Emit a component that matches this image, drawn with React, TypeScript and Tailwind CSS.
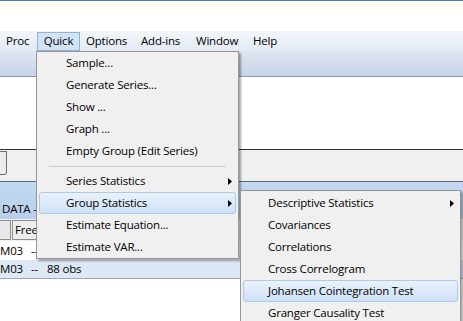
import React from "react";

const font = { fontFamily: '"Open Sans", "Noto Sans", sans-serif' };

function Arrow() {
  return (
    <svg width="4" height="7" viewBox="0 0 4 7" className="block">
      <path d="M0 0 L4 3.5 L0 7 Z" fill="#000" />
    </svg>
  );
}

function Item({ label, arrow, active, pad }: { label: string; arrow?: boolean; active?: boolean; pad: string }) {
  return (
    <div className="relative h-[22px] flex items-center">
      {active && (
        <div className="absolute inset-y-0 left-[2px] right-[2px] rounded-[3px] border border-[#a9c9ee] bg-gradient-to-b from-[#eaf2fc] to-[#cfe1f6]" />
      )}
      <span className={`relative ${pad} text-[11.5px] tracking-[-0.2px] text-black whitespace-nowrap`}>{label}</span>
      {arrow && (
        <span className="absolute right-[6px] top-[8px]">
          <Arrow />
        </span>
      )}
    </div>
  );
}

export default function App() {
  return (
    <div className="relative w-[463px] h-[321px] overflow-hidden bg-white text-[11.5px] tracking-[-0.2px]" style={font}>
      {/* top frame */}
      <div className="h-[1px] bg-[#3f7db5]" />
      <div className="h-[11px] bg-[#fffff5]" />
      <div className="h-[19px] bg-white" />
      {/* menu bar */}
      <div className="h-[20px] flex items-center bg-gradient-to-b from-[#f3f6fb] to-[#e3eaf4] text-black">
        <span className="ml-[6px] w-[31px]">Proc</span>
        <span className="w-[43px] h-[19px] flex items-center justify-center border border-[#8fb2dc] bg-[#d3e3f6]">Quick</span>
        <span className="ml-[6px] w-[55px]">Options</span>
        <span className="w-[55px]">Add-ins</span>
        <span className="w-[57px]">Window</span>
        <span>Help</span>
      </div>
      {/* toolbar */}
      <div className="h-[26px] bg-gradient-to-b from-[#dfe7f2] to-[#c6d4e7] border-b border-[#8e9aa8]" />
      {/* white area */}
      <div className="h-[72px] bg-white" />
      {/* gray panel */}
      <div className="h-[32px] bg-[#f0f0f0] border-t border-[#333] flex items-start">
        <div className="mt-[1px] w-[7px] h-[24px] border border-l-0 border-[#707070] rounded-br-[3px] bg-[#ececec]" />
      </div>
      {/* DATA window */}
      <div className="border-t border-[#5a6a7a] h-[38px] bg-gradient-to-b from-[#c4d9f0] to-[#b7cfeb] flex items-end pb-[2px]">
        <span className="pl-[2px] text-black">DATA -</span>
      </div>
      <div className="h-[22px] bg-[#f0f0f0] flex items-center gap-[1px]">
        <div className="w-[11px] h-[20px] border border-l-0 border-[#8d8d8d] bg-[#e8e8e8]" />
        <div className="h-[20px] px-[2px] border border-[#8d8d8d] bg-[#eeeeee] flex items-center">Freeze</div>
      </div>
      <div className="h-[19px] bg-white flex items-center">
        <span>M03</span>
        <span className="ml-[8px]">--</span>
      </div>
      <div className="h-[19px] bg-[#dce8f6] border-b border-[#9aa9ba] flex items-center">
        <span>M03</span>
        <span className="ml-[8px]">--</span>
        <span className="ml-[9px]">88 obs</span>
      </div>

      {/* Quick menu */}
      <div className="absolute left-[36px] top-[51px] w-[203px] border border-[#979797] bg-[#f0f0f0] shadow-[2px_2px_2px_rgba(0,0,0,0.35)]">
        <Item pad="pl-[29px]" label="Sample..." />
        <Item pad="pl-[29px]" label="Generate Series..." />
        <Item pad="pl-[29px]" label="Show ..." />
        <Item pad="pl-[29px]" label="Graph ..." />
        <Item pad="pl-[29px]" label="Empty Group (Edit Series)" />
        <div className="h-[8px] flex items-center px-[12px]">
          <div className="h-[1px] w-full bg-[#cfcfcf]" />
        </div>
        <Item pad="pl-[29px]" label="Series Statistics" arrow />
        <Item pad="pl-[29px]" label="Group Statistics" arrow active />
        <Item pad="pl-[29px]" label="Estimate Equation..." />
        <Item pad="pl-[29px]" label="Estimate VAR..." />
      </div>

      {/* Group Statistics submenu */}
      <div className="absolute left-[240px] top-[190px] w-[221px] border border-[#979797] bg-[#f0f0f0] pt-[1px] shadow-[2px_2px_2px_rgba(0,0,0,0.35)]">
        <Item pad="pl-[27px]" label="Descriptive Statistics" arrow />
        <Item pad="pl-[27px]" label="Covariances" />
        <Item pad="pl-[27px]" label="Correlations" />
        <Item pad="pl-[27px]" label="Cross Correlogram" />
        <Item pad="pl-[27px]" label="Johansen Cointegration Test" active />
        <Item pad="pl-[27px]" label="Granger Causality Test" />
      </div>
    </div>
  );
}
